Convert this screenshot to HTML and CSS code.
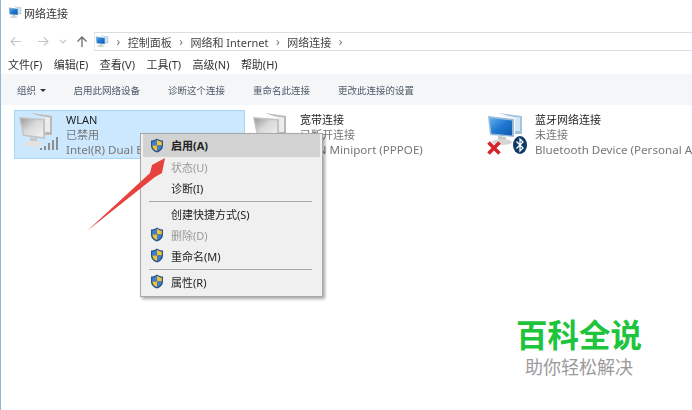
FILE: index.html
```html
<!DOCTYPE html>
<html lang="zh-CN">
<head>
<meta charset="utf-8">
<title>网络连接</title>
<link rel="stylesheet" href="styles.css">
</head>
<body>
<svg class="defs" width="0" height="0">
  <defs>
    <linearGradient id="gray-screen" x1="0" y1="0" x2="1" y2="1">
      <stop offset="0" stop-color="#9a9a9a"/>
      <stop offset=".45" stop-color="#d8d8d8"/>
      <stop offset="1" stop-color="#f2f2f2"/>
    </linearGradient>
    <linearGradient id="blue-screen" x1="0" y1="0" x2="1" y2="1">
      <stop offset="0" stop-color="#5fb0ee"/>
      <stop offset=".5" stop-color="#1f78d0"/>
      <stop offset="1" stop-color="#0f5cb0"/>
    </linearGradient>
    <symbol id="shield" viewBox="0 0 14 15">
      <path d="M7 .5C5 2 3 2.600 1 2.600V7.500C1 11 3.500 13.300 7 14.500C10.500 13.300 13 11 13 7.500V2.600C11 2.600 9 2 7 .5Z" fill="#27508f"/>
      <path d="M7 1.800V7.500H2.200V3.700C4 3.600 5.500 3 7 1.800Z" fill="#3f7fd0"/>
      <path d="M7 1.800C8.500 3 10 3.600 11.800 3.700V7.500H7Z" fill="#f2c230"/>
      <path d="M2.300 7.500H7V13.100C4.300 12 2.500 10.200 2.300 7.500Z" fill="#f2c230"/>
      <path d="M7 7.500H11.700C11.500 10.200 9.700 12 7 13.100Z" fill="#3f7fd0"/>
    </symbol>
    <symbol id="pc-gray" viewBox="0 0 38 38">
      <path d="M14 1L35 4V23L28 23V6Z" fill="#b9b9b9"/>
      <path d="M17 3L33 5.500V20L28 20V6Z" fill="#ececec"/>
      <path d="M2 5L28 7V27L6 24Z" fill="#c4c4c4"/>
      <path d="M3.500 6.500L26 8.500V25L7 22.500Z" fill="url(#gray-screen)"/>
      <path d="M13 25L20 26V30L13 29Z" fill="#c8c8c8"/>
      <ellipse cx="17" cy="32" rx="10" ry="3" fill="#e2e2e2"/>
    </symbol>
    <symbol id="pc-blue" viewBox="0 0 38 38">
      <path d="M12 1L36 4V22L29 22V6Z" fill="#a4c4de"/>
      <path d="M14 3L34 5.500V19L29 19V6Z" fill="#d6e7f3"/>
      <path d="M2 4L28 7V25L4 23Z" fill="#9abbd8"/>
      <path d="M3.500 6L26 8.500V23.500L5.500 21.500Z" fill="url(#blue-screen)"/>
      <path d="M12 24L20 25V28L12 27Z" fill="#c4c4c4"/>
      <ellipse cx="16" cy="30" rx="10" ry="3" fill="#d6d6d6"/>
    </symbol>
  </defs>
</svg>

<div class="window">
  <header class="title-bar">
    <svg class="small-icon" viewBox="0 0 38 38"><use href="#pc-blue"/></svg>
    <span>网络连接</span>
  </header>

  <nav class="nav-bar">
    <div class="nav-buttons">
      <svg class="nav-svg" width="90" height="18" viewBox="0 0 90 18">
        <path d="M21 9.500H11M15 5.500L11 9.500L15 13.500" class="faint"/>
        <path d="M38 9.500H48M44 5.500L48 9.500L44 13.500" class="faint"/>
        <path d="M60 8L63 11L66 8" class="faint"/>
        <path d="M82 15V5M77.500 9.500L82 5L86.500 9.500" class="dark"/>
      </svg>
    </div>
    <div class="address">
      <svg class="small-icon" viewBox="0 0 38 38"><use href="#pc-blue"/></svg>
      <span class="crumb-sep">›</span><span>控制面板</span>
      <span class="crumb-sep">›</span><span>网络和 Internet</span>
      <span class="crumb-sep">›</span><span>网络连接</span>
      <span class="crumb-sep">›</span>
    </div>
  </nav>

  <div class="menu-bar">
    <span>文件(F)</span><span>编辑(E)</span><span>查看(V)</span><span>工具(T)</span><span>高级(N)</span><span>帮助(H)</span>
  </div>

  <div class="toolbar">
    <span class="tool-org">组织 <i class="caret"></i></span>
    <span>启用此网络设备</span>
    <span>诊断这个连接</span>
    <span>重命名此连接</span>
    <span>更改此连接的设置</span>
  </div>

  <main class="items">
    <div class="item selected">
      <span class="item-icon">
        <svg class="pc" viewBox="0 0 38 38"><use href="#pc-gray"/></svg>
        <svg class="bars" viewBox="0 0 22 16">
          <path d="M2 15V13M6 15V11M10 15V8M14 15V5M18 15V2" stroke="#8b8f92" stroke-width="2" fill="none"/>
        </svg>
      </span>
      <div class="item-text">
        <div class="item-name">WLAN</div>
        <div class="item-sub">已禁用</div>
        <div class="item-sub item-desc">Intel(R) Dual B</div>
      </div>
    </div>
    <div class="item second">
      <span class="item-icon">
        <svg class="pc" viewBox="0 0 38 38"><use href="#pc-gray"/></svg>
      </span>
      <div class="item-text">
        <div class="item-name">宽带连接</div>
        <div class="item-sub">已断开连接</div>
        <div class="item-sub item-desc">WAN Miniport (PPPOE)</div>
      </div>
    </div>
    <div class="item third">
      <span class="item-icon">
        <svg class="pc" viewBox="0 0 38 38"><use href="#pc-blue"/></svg>
        <svg class="x-mark" viewBox="0 0 16 16"><path d="M2.500 2.500L13.500 13.500M13.500 2.500L2.500 13.500" stroke="#d8232a" stroke-width="3.600" fill="none"/></svg>
        <svg class="bt" viewBox="0 0 14 18">
          <ellipse cx="7" cy="9" rx="7" ry="9" fill="#0f3a66"/>
          <path d="M3.500 5.500L10 12L7 15V3L10 6L3.500 12.500" stroke="#fff" stroke-width="1.300" fill="none"/>
        </svg>
      </span>
      <div class="item-text">
        <div class="item-name">蓝牙网络连接</div>
        <div class="item-sub">未连接</div>
        <div class="item-sub item-desc">Bluetooth Device (Personal Area Network)</div>
      </div>
    </div>
  </main>
</div>

<div class="context-menu">
  <div class="cm-row first active"><svg class="shield"><use href="#shield"/></svg><span>启用(A)</span></div>
  <div class="cm-row disabled"><span>状态(U)</span></div>
  <div class="cm-row"><span>诊断(I)</span></div>
  <div class="cm-sep"></div>
  <div class="cm-row"><span>创建快捷方式(S)</span></div>
  <div class="cm-row disabled"><svg class="shield"><use href="#shield"/></svg><span>删除(D)</span></div>
  <div class="cm-row"><svg class="shield"><use href="#shield"/></svg><span>重命名(M)</span></div>
  <div class="cm-sep"></div>
  <div class="cm-row"><svg class="shield"><use href="#shield"/></svg><span>属性(R)</span></div>
</div>

<svg class="arrow" width="90" height="84" viewBox="0 0 90 84">
  <path d="M3 78L66 20L68 12L81 5L78 20L71 24Z" fill="#e8423f"/>
</svg>

<div class="watermark">
  <div class="wm-title">百科全说</div>
  <div class="wm-sub">助你轻松解决</div>
</div>
</body>
</html>
```
FILE: styles.css
```css
* { box-sizing: border-box; }
html, body { margin: 0; padding: 0; }
body {
  position: relative;
  width: 692px;
  height: 410px;
  overflow: hidden;
  background: #fff;
  color: #222;
  font-family: "Noto Sans", "Noto Sans CJK SC", sans-serif;
  font-size: 11px;
}
.defs { position: absolute; }
.window {
  height: 410px;
  border-left: 1px solid #8fb8d8;
  filter: blur(0.45px);
}
.small-icon { width: 14px; height: 14px; flex: none; }

.title-bar {
  height: 32px;
  padding: 0 0 6px 7px;
  display: flex;
  align-items: center;
  gap: 2px;
  color: #333;
}
.nav-bar {
  height: 19px;
  display: flex;
}
.nav-buttons { width: 93px; flex: none; display: flex; align-items: flex-start; }
.nav-svg { margin-left: -1px; }
.faint { stroke: #c4c6c8; stroke-width: 1.200; fill: none; }
.dark { stroke: #6a6d70; stroke-width: 1.300; fill: none; }
.address {
  flex: 1;
  display: flex;
  align-items: center;
  gap: 7.5px;
  padding-left: 0;
  border-top: 1px solid #dcdfe2;
  border-bottom: 1px solid #dcdfe2;
  border-left: 1px solid #e8e8e8;
  color: #444;
}
.crumb-sep { color: #777; font-size: 12px; line-height: 1; }
.menu-bar {
  height: 23px;
  padding: 6px 0 0 7px;
  display: flex;
  gap: 11.4px;
  color: #333;
  line-height: 16px;
}
.toolbar {
  height: 31px;
  display: flex;
  align-items: center;
  gap: 28px;
  padding-left: 16px;
  background: #f5f6f7;
  color: #4c5a6a;
  font-size: 9.5px;
}
.tool-org { margin-right: -1px; }
.caret {
  display: inline-block;
  width: 0;
  height: 0;
  margin-left: 2px;
  vertical-align: middle;
  border: 3px solid transparent;
  border-top: 3px solid #333;
  border-bottom: 0;
}
.items {
  display: flex;
  padding: 5px 0 0 13px;
}
.item {
  flex: none;
  height: 49px;
  display: flex;
  gap: 3px;
  overflow: hidden;
  border: 1px solid transparent;
}
.selected {
  width: 231px;
  background: #cce8ff;
  border-color: #a5d7fb;
}
.second { width: 235px; margin-left: 3px; }
.third { width: 210px; }
.item-icon {
  position: relative;
  width: 48px;
  height: 47px;
  flex: none;
}
.pc { position: absolute; left: 2px; top: 1px; width: 38px; height: 38px; }
.bars { position: absolute; left: 24px; top: 24px; width: 22px; height: 16px; }
.x-mark { position: absolute; left: 2px; top: 29px; width: 16px; height: 16px; }
.bt { position: absolute; left: 29px; top: 24px; width: 14px; height: 20px; }
.item-text { line-height: 15px; white-space: nowrap; padding-top: 1px; }
.item-name { color: #1f1f1f; }
.item-sub { color: #777; }
.item-desc { font-size: 11.6px; }

.context-menu {
  position: absolute;
  left: 140px;
  top: 133px;
  width: 183px;
  height: 164px;
  padding: 0 2px;
  background: #f0f0f0;
  border: 1px solid #a8a8a8;
  box-shadow: 2px 2px 3px rgba(0, 0, 0, .35);
  color: #222;
  filter: blur(0.35px);
}
.cm-row {
  height: 21px;
  padding-left: 28px;
  position: relative;
  display: flex;
  align-items: center;
}
.first { height: 23px; padding-bottom: 1px; margin-bottom: -1px; }
.active { background: #d2d2d2; font-weight: 700; }
.disabled { color: #9a9a9a; }
.shield { position: absolute; left: 7px; top: 3px; width: 14px; height: 15px; }
.first .shield { top: 4px; }
.cm-sep {
  height: 1px;
  margin: 3px 8px 1px 6px;
  background: #a8a8a8;
}
.arrow { position: absolute; left: 84px; top: 153px; }
.watermark {
  position: absolute;
  left: 516px;
  top: 318px;
  width: 126px;
  text-align: center;
  font-family: "Noto Sans CJK SC", sans-serif;
  line-height: 1;
}
.wm-title { color: #1ec43c; font-size: 31.5px; font-weight: 700; }
.wm-sub { margin-top: 7px; color: #9b9b9b; font-size: 18px; }
```
